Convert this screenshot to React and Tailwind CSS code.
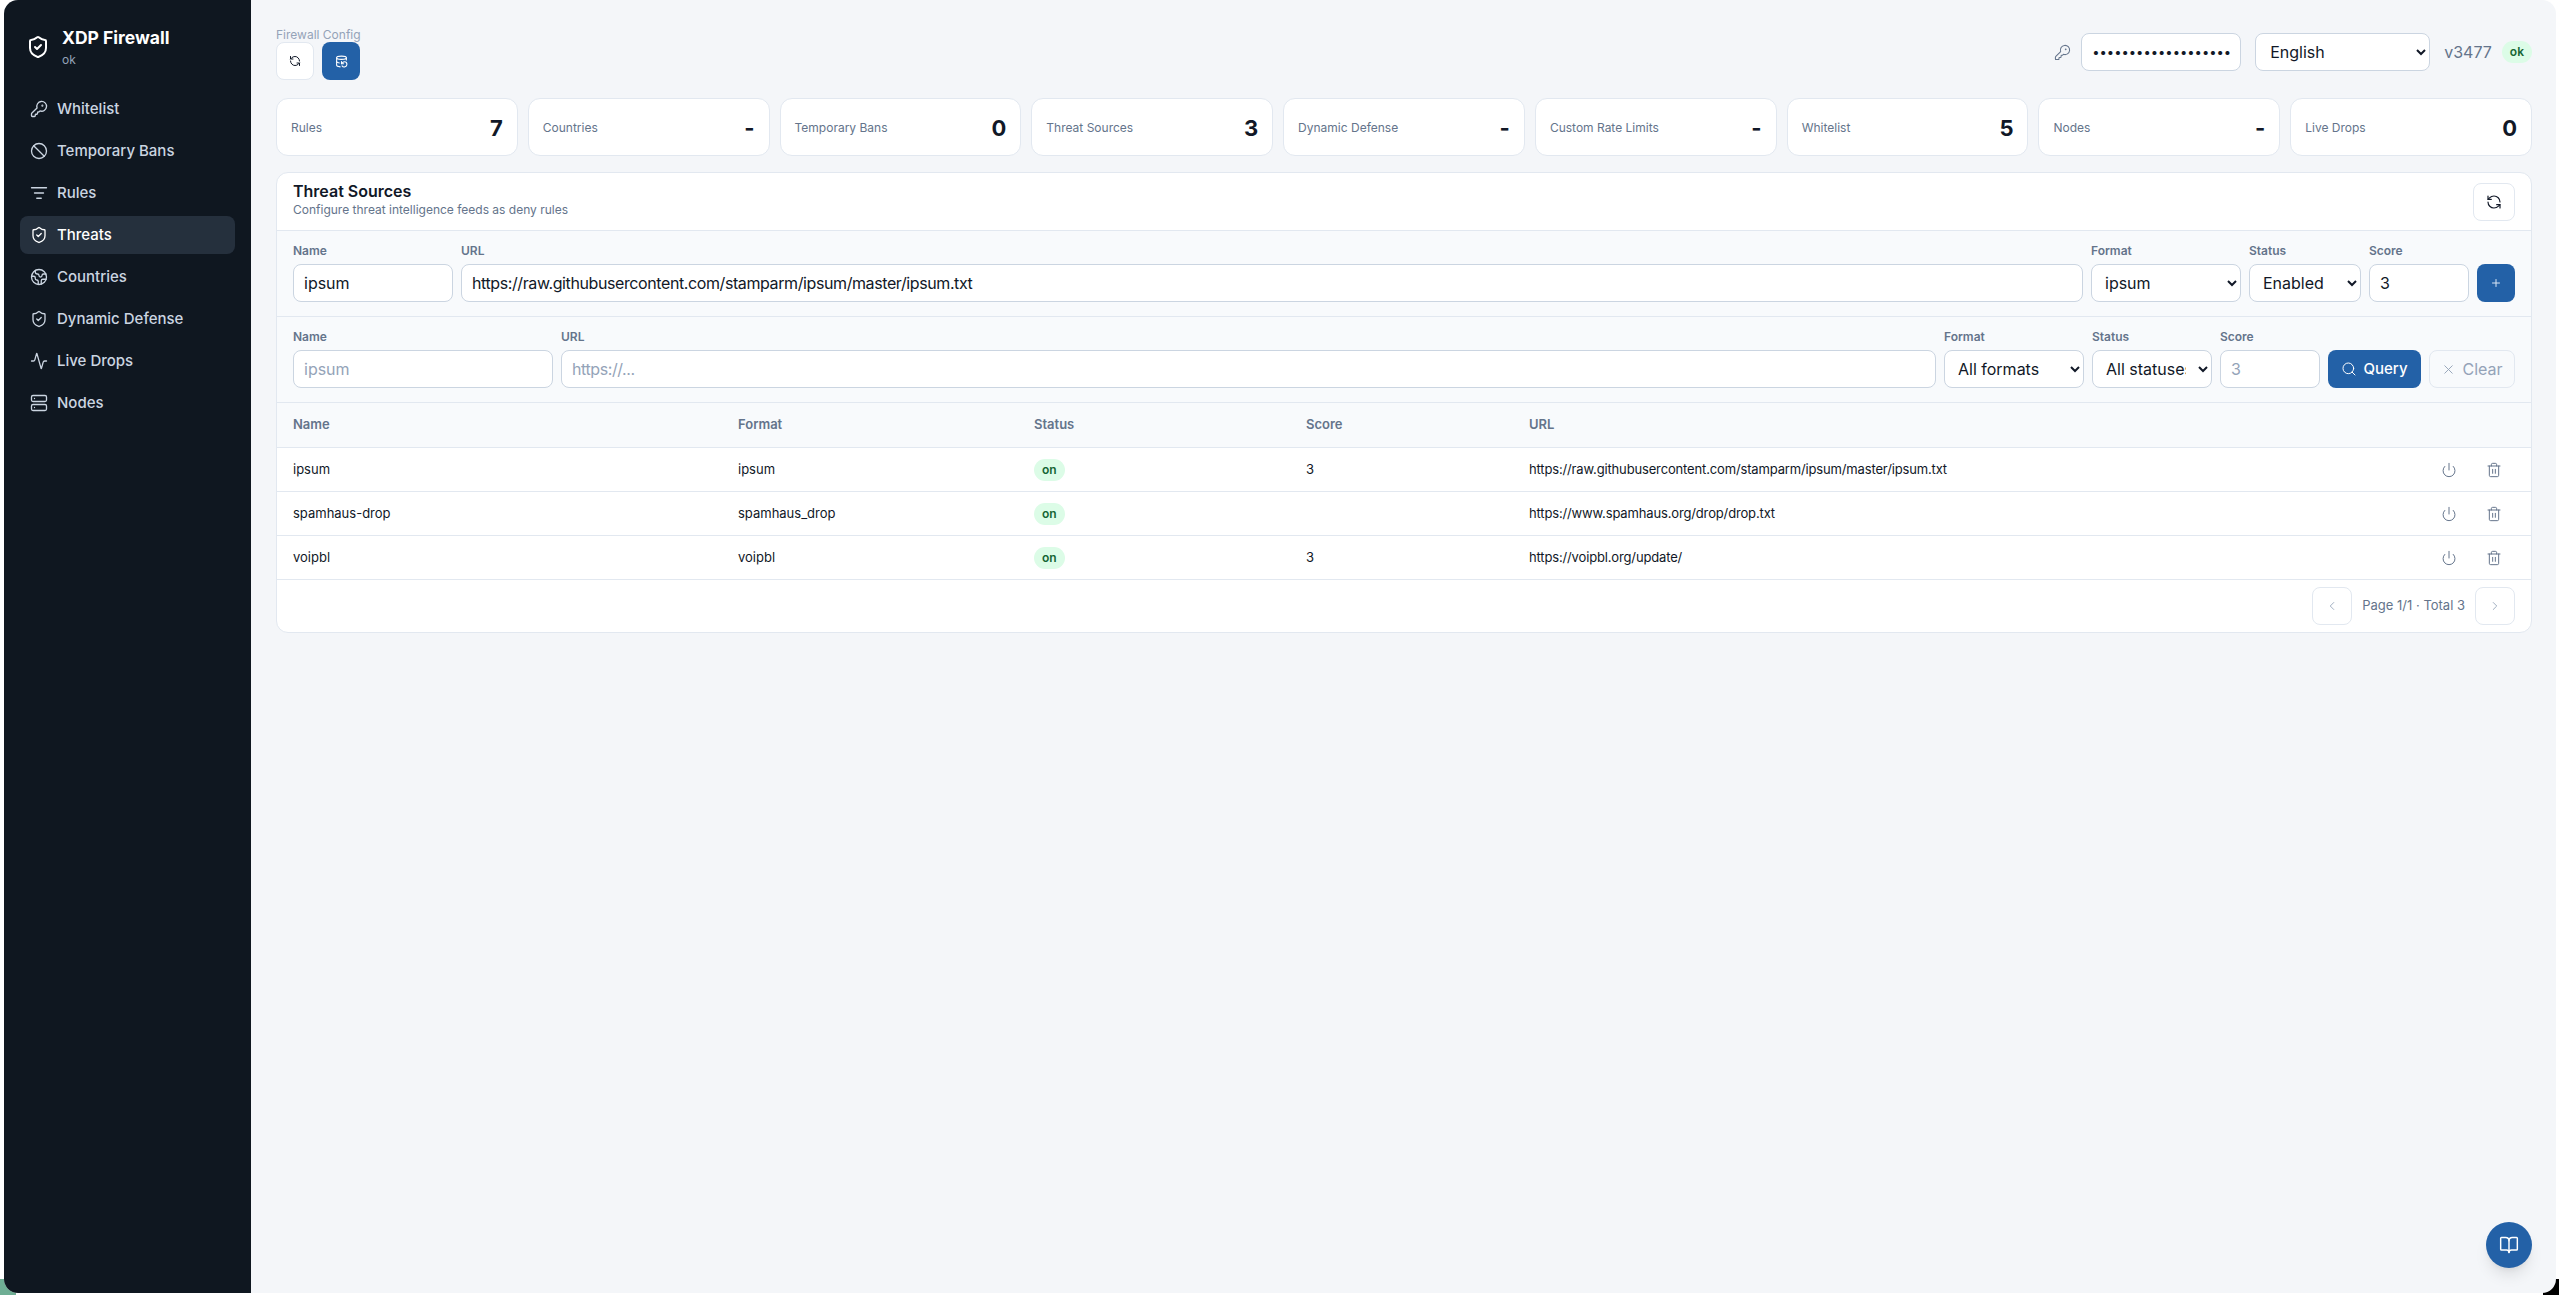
import {
  BookOpen,
  Ban,
  ChevronLeft,
  ChevronRight,
  DatabaseBackup,
  Earth,
  KeyRound,
  ListFilter,
  Activity,
  Plus,
  Power,
  RefreshCcw,
  Search,
  Server,
  ShieldCheck,
  Trash2,
  X,
} from "lucide-react";

const navItems = [
  { label: "Whitelist", icon: KeyRound },
  { label: "Temporary Bans", icon: Ban },
  { label: "Rules", icon: ListFilter },
  { label: "Threats", icon: ShieldCheck, active: true },
  { label: "Countries", icon: Earth },
  { label: "Dynamic Defense", icon: ShieldCheck },
  { label: "Live Drops", icon: Activity },
  { label: "Nodes", icon: Server },
];

const stats = [
  ["Rules", "7"],
  ["Countries", "-"],
  ["Temporary Bans", "0"],
  ["Threat Sources", "3"],
  ["Dynamic Defense", "-"],
  ["Custom Rate Limits", "-"],
  ["Whitelist", "5"],
  ["Nodes", "-"],
  ["Live Drops", "0"],
];

const sources = [
  { name: "ipsum", format: "ipsum", score: "3", url: "https://raw.githubusercontent.com/stamparm/ipsum/master/ipsum.txt" },
  { name: "spamhaus-drop", format: "spamhaus_drop", score: "", url: "https://www.spamhaus.org/drop/drop.txt" },
  { name: "voipbl", format: "voipbl", score: "3", url: "https://voipbl.org/update/" },
];

const inputCls =
  "h-[38px] w-full rounded-lg border border-[#cbd5e1] bg-white px-[10px] text-base text-[#111827] placeholder:text-[#94a3b8] outline-none";
const selectCls = "h-[38px] w-full rounded-lg border border-[#cbd5e1] bg-white px-[9px] text-base text-[#111827]";
const tableCols = "grid grid-cols-[445px_296px_272px_223px_1fr_90px] items-center px-4";

function Field({ label, className, children }) {
  return (
    <label className={`flex flex-col gap-[6px] ${className}`}>
      <span className="text-xs leading-[14px] font-semibold text-[#64748b]">{label}</span>
      {children}
    </label>
  );
}

function OnBadge({ children }) {
  return (
    <span className="inline-flex h-[22px] items-center rounded-full bg-[#dcfce7] px-2 text-xs font-semibold text-[#166534]">
      {children}
    </span>
  );
}

function Sidebar() {
  return (
    <aside className="flex w-[247px] shrink-0 flex-col bg-[#0f1720] px-4">
      <div className="flex h-[90px] items-center gap-[12px] pl-[6px] pt-[4px]">
        <ShieldCheck size={24} strokeWidth={2} className="text-white" />
        <div>
          <div className="text-[17.5px] leading-6 font-bold text-white">XDP Firewall</div>
          <div className="mt-[2px] text-xs leading-4 text-[#94a3b8]">ok</div>
        </div>
      </div>
      <nav className="flex flex-col gap-1">
        {navItems.map((item) => {
          const Icon = item.icon;
          return (
            <a
              key={item.label}
              className={`flex h-[38px] items-center gap-[9px] rounded-lg px-[10px] text-[15px] font-medium ${
                item.active ? "bg-[#25303d] text-white" : "text-[#cbd5e1]"
              }`}
            >
              <Icon size={18} strokeWidth={1.75} />
              {item.label}
            </a>
          );
        })}
      </nav>
    </aside>
  );
}

function Header() {
  return (
    <header className="flex items-start justify-between">
      <div>
        <div className="pt-[1px] text-xs leading-[14px] text-[#94a3b8]">Firewall Config</div>
        <div className="flex gap-2">
          <button className="flex h-[38px] w-[38px] items-center justify-center rounded-lg border border-[#e2e8f0] bg-white text-[#111827]">
            <RefreshCcw size={12} />
          </button>
          <button className="flex h-[38px] w-[38px] items-center justify-center rounded-lg bg-[#2361a7] text-white">
            <DatabaseBackup size={13} />
          </button>
        </div>
      </div>
      <div className="flex items-center pt-[6px]">
        <KeyRound size={17} strokeWidth={1.5} className="mr-[10px] text-[#64748b]" />
        <input
          type="password"
          defaultValue="aaaaaaaaaaaaaaaaaaa"
          className="h-[38px] w-[160px] rounded-lg border border-[#cbd5e1] bg-white px-[10px] text-[13px] text-[#111827] outline-none"
        />
        <select className="ml-[14px] h-[38px] w-[175px] rounded-lg border border-[#cbd5e1] bg-white px-[10px] text-base text-[#111827]">
          <option>English</option>
        </select>
        <span className="ml-[14px] text-base text-[#64748b]">v3477</span>
        <span className="ml-[10px] inline-flex h-[22px] items-center rounded-full bg-[#dcfce7] px-[8px] text-xs font-semibold text-[#166534]">
          ok
        </span>
      </div>
    </header>
  );
}

function StatCards() {
  return (
    <div className="mt-[18px] grid grid-cols-9 gap-[10px]">
      {stats.map(([label, value]) => (
        <div key={label} className="flex h-[58px] items-center justify-between rounded-xl border border-[#e2e8f0] bg-white px-[14px] pt-[2px]">
          <span className="text-xs text-[#64748b]">{label}</span>
          <span className="text-[22px] font-bold text-[#111827]">{value}</span>
        </div>
      ))}
    </div>
  );
}

function ThreatSources() {
  return (
    <section className="mt-4 rounded-xl border border-[#e2e8f0] bg-white">
      <div className="flex h-[57px] items-center justify-between px-4">
        <div className="pb-[4px]">
          <h2 className="mb-[1px] text-base leading-5 font-semibold text-[#111827]">Threat Sources</h2>
          <p className="text-xs leading-4 text-[#64748b]">Configure threat intelligence feeds as deny rules</p>
        </div>
        <button className="flex h-[38px] w-[42px] items-center justify-center rounded-lg border border-[#e2e8f0] bg-white text-[#111827]">
          <RefreshCcw size={16} strokeWidth={1.75} />
        </button>
      </div>

      <div className="flex h-[86px] items-end gap-2 border-t border-[#e2e8f0] bg-[#f8fafc] px-4 pb-[14px]">
        <Field label="Name" className="w-[160px]">
          <input className={inputCls} defaultValue="ipsum" />
        </Field>
        <Field label="URL" className="flex-1">
          <input
            className={`${inputCls} tracking-[-0.4px]`}
            defaultValue="https://raw.githubusercontent.com/stamparm/ipsum/master/ipsum.txt"
          />
        </Field>
        <Field label="Format" className="w-[150px]">
          <select className={selectCls}>
            <option>ipsum</option>
          </select>
        </Field>
        <Field label="Status" className="w-[112px]">
          <select className={selectCls}>
            <option>Enabled</option>
          </select>
        </Field>
        <Field label="Score" className="w-[100px]">
          <input className={inputCls} defaultValue="3" />
        </Field>
        <button className="flex h-[38px] w-[38px] items-center justify-center rounded-lg bg-[#2361a7] text-[#dbe7f5]">
          <Plus size={12} />
        </button>
      </div>

      <div className="flex h-[86px] items-end gap-2 border-t border-[#e2e8f0] bg-[#f8fafc] px-4 pb-[14px]">
        <Field label="Name" className="w-[260px]">
          <input className={inputCls} placeholder="ipsum" />
        </Field>
        <Field label="URL" className="flex-1">
          <input className={`${inputCls} tracking-[-0.4px]`} placeholder="https://..." />
        </Field>
        <Field label="Format" className="w-[140px]">
          <select className={selectCls}>
            <option>All formats</option>
          </select>
        </Field>
        <Field label="Status" className="w-[120px]">
          <select className={selectCls}>
            <option>All statuses</option>
          </select>
        </Field>
        <Field label="Score" className="w-[100px]">
          <input className={inputCls} placeholder="3" />
        </Field>
        <button className="flex h-[38px] w-[93px] items-center justify-center gap-[6px] rounded-lg bg-[#2361a7] text-[15px] font-medium text-white">
          <Search size={16} strokeWidth={1.5} />
          Query
        </button>
        <button className="flex h-[38px] w-[86px] items-center justify-center gap-[6px] rounded-lg border border-[#e2e8f0] bg-[#f8fafc] text-base text-[#94a3b8]">
          <X size={15} strokeWidth={1.5} />
          Clear
        </button>
      </div>

      <div className={`${tableCols} h-[45px] border-t border-[#e2e8f0] bg-[#f8fafc] text-[13px] font-semibold text-[#64748b]`}>
        <span>Name</span>
        <span>Format</span>
        <span>Status</span>
        <span>Score</span>
        <span>URL</span>
      </div>
      {sources.map((s) => (
        <div key={s.name} className={`${tableCols} h-[44px] border-t border-[#e2e8f0] text-[13px] text-[#111827]`}>
          <span>{s.name}</span>
          <span>{s.format}</span>
          <span>
            <OnBadge>on</OnBadge>
          </span>
          <span>{s.score}</span>
          <span className="tracking-[-0.15px]">{s.url}</span>
          <span className="flex items-center justify-end gap-[29px] pr-[13px] text-[#64748b]">
            <Power size={16} strokeWidth={1.5} />
            <Trash2 size={16} strokeWidth={1.5} />
          </span>
        </div>
      ))}
      <div className="flex h-[53px] items-center justify-end gap-[10px] border-t border-[#e2e8f0] px-4">
        <button className="flex h-[38px] w-[40px] items-center justify-center rounded-lg border border-[#e2e8f0] text-[#94a3b8]">
          <ChevronLeft size={14} strokeWidth={1.5} />
        </button>
        <span className="text-[13px] text-[#64748b]">Page 1/1 · Total 3</span>
        <button className="flex h-[38px] w-[40px] items-center justify-center rounded-lg border border-[#e2e8f0] text-[#94a3b8]">
          <ChevronRight size={14} strokeWidth={1.5} />
        </button>
      </div>
    </section>
  );
}

export default function App() {
  return (
    <div className="relative h-[1295px] w-full overflow-hidden bg-white font-['Inter',sans-serif]">
      <span className="absolute bottom-0 left-0 h-4 w-4 bg-[#6fae94]" />
      <span className="absolute bottom-0 right-0 h-4 w-4 bg-black" />
      <div className="relative ml-[4px] mr-[3px] flex h-[1293px] overflow-hidden rounded-[14px] bg-[#f4f6f9]">
        <Sidebar />
        <main className="min-w-0 flex-1 pl-[25px] pr-[24px] pt-[27px]">
          <Header />
          <StatCards />
          <ThreatSources />
        </main>
      </div>
      <button className="absolute left-[2486px] top-[1222px] flex h-[46px] w-[46px] items-center justify-center rounded-full bg-[#2361a7] text-white shadow-lg">
        <BookOpen size={20} strokeWidth={1.75} />
      </button>
    </div>
  );
}
